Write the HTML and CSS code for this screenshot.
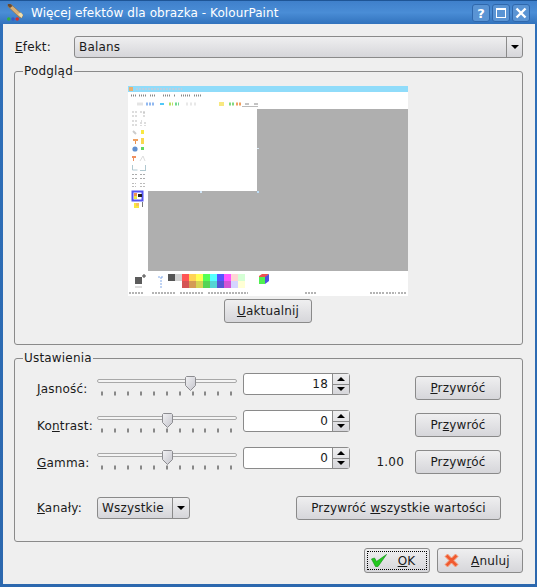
FILE: index.html
```html
<!DOCTYPE html>
<html>
<head>
  <meta charset="utf-8">
  <title>Więcej efektów dla obrazka - KolourPaint</title>
  <link rel="stylesheet" href="styles.css">
</head>
<body>
  <svg class="defs" width="0" height="0">
    <defs>
      <symbol id="slider-base" viewBox="0 0 140 24">
        <rect x="0.5" y="6.5" width="139" height="3" rx="1.5" fill="#f4f4f4" stroke="#a8a8a8"/>
        <path d="M5 18.500v4M18 18.500v4M31 18.500v4M44 18.500v4M57 18.500v4M70 18.500v4M83 18.500v4M96 18.500v4M108 18.500v4M121 18.500v4M134 18.500v4" stroke="#222"/>
      </symbol>
      <linearGradient id="handle-fill" x1="0" y1="0" x2="1" y2="1">
        <stop offset="0" stop-color="#f2f2f4"/>
        <stop offset="1" stop-color="#c4c4cc"/>
      </linearGradient>
      <symbol id="slider-handle" viewBox="0 0 11 15">
        <path d="M1.5 0.5h8l1 1v8l-5 5-5-5v-8z" fill="url(#handle-fill)" stroke="#8c8c90"/>
      </symbol>
    </defs>
  </svg>

  <div class="window">
    <div class="titlebar">
      <svg class="app-icon" width="18" height="18" viewBox="0 0 18 18">
        <path d="M1 0l2.500 0 12.500 11-1.500 3-2.500-1-11-10.500z" fill="#d8b078" stroke="#8a6a40" stroke-width="0.6"/>
        <path d="M1 0l2.500 0 2 2-2.500 2-2-2z" fill="#6a4a30"/>
        <path d="M11 10l3-1.500 2 2.500-1.500 3z" fill="#f0e0b0"/>
        <circle cx="1.800" cy="15" r="1.800" fill="#30b040"/>
        <circle cx="6" cy="15" r="1.800" fill="#3858c8"/>
        <circle cx="10.200" cy="15" r="1.800" fill="#d82c2c"/>
      </svg>
      <span class="title-text">Więcej efektów dla obrazka - KolourPaint</span>
      <div class="title-buttons">
        <div class="title-btn help">?</div>
        <div class="title-btn"><span class="max-glyph"></span></div>
        <div class="title-btn">
          <svg width="12" height="12" viewBox="0 0 12 12"><path d="M1.500 1.500l9 9M10.500 1.500l-9 9" stroke="#fff" stroke-width="2.400"/></svg>
        </div>
      </div>
    </div>

    <div class="content">
      <div class="effect-row">
        <label class="effect-label"><u>E</u>fekt:</label>
        <div class="combo combo-wide">
          <span class="combo-text">Balans</span>
          <span class="combo-arrow"><i class="arrow-down"></i></span>
        </div>
      </div>

      <fieldset class="group preview-group">
        <legend>Podgląd</legend>
        <svg class="preview" width="280" height="210" viewBox="0 0 280 210">
          <rect width="280" height="210" fill="#fff"/>
          <rect width="280" height="6" fill="#90dcfa"/>
          <rect x="1" y="1" width="4" height="4" fill="#e8b070"/>
          <path d="M8 3h46" stroke="#b8d0e0" stroke-width="2" stroke-dasharray="2 1"/>
          <!-- menu -->
          <path d="M3 9.500h5M11 9.500h7M22 9.500h5M35 9.500h8M46 9.500h1M53 9.500h9M66 9.500h8" stroke="#888" stroke-width="2" stroke-dasharray="1 1"/>
          <!-- toolbar -->
          <path d="M9 18h6" stroke="#e4e4e4" stroke-width="3"/>
          <path d="M18 18h5M24 18h3" stroke="#90b8f0" stroke-width="3" stroke-dasharray="2 1"/>
          <path d="M32 18h4" stroke="#50c8f8" stroke-width="2"/>
          <path d="M41 18h4" stroke="#b8e060" stroke-width="3" stroke-dasharray="2 1"/>
          <path d="M47 18h4" stroke="#70d890" stroke-width="3" stroke-dasharray="2 1"/>
          <path d="M58 18h10" stroke="#e8e8e8" stroke-width="3" stroke-dasharray="2 2"/>
          <path d="M91 18h5" stroke="#f8e880" stroke-width="4"/>
          <path d="M101 18h6" stroke="#80d880" stroke-width="3" stroke-dasharray="2 1"/>
          <path d="M108 18h6" stroke="#f0a060" stroke-width="3" stroke-dasharray="2 1"/>
          <path d="M114 20.500h16" stroke="#bbb"/>
          <path d="M117 18h4M126 18h4" stroke="#888" stroke-width="1"/>
          <!-- tool box -->
          <path d="M4 26h6M4 30h6M12 26h5M16 26v5" stroke="#bbb" stroke-dasharray="2 1"/>
          <path d="M4 35h5M4 39h5M13 35h1M13 36v4M17 36v4" stroke="#bbb" stroke-dasharray="2 1"/>
          <path d="M5 45l3 3" stroke="#ccc" stroke-width="2"/>
          <rect x="13" y="44" width="3" height="4" fill="#f8e840"/>
          <rect x="5" y="53" width="5" height="2" fill="#f0a060"/>
          <rect x="7" y="55" width="1" height="3" fill="#e89050"/>
          <rect x="13" y="52" width="3" height="6" fill="#f8d850"/>
          <circle cx="7" cy="63" r="2.600" fill="#6090d0"/>
          <rect x="13" y="61" width="3" height="3" fill="#60d860"/>
          <rect x="4" y="70" width="4" height="2" fill="#f09060"/>
          <rect x="5" y="72" width="1" height="3" fill="#f09060"/>
          <path d="M12 75l3-5 2 5" fill="none" stroke="#ddd"/>
          <path d="M4.500 79v5h5M12 84.500h6M17.500 79v5" fill="none" stroke="#b0c8d0"/>
          <path d="M4 88.500h5M4 92.500h5M12 88.500h5M12 92.500h5" stroke="#aaa" stroke-dasharray="2 1"/>
          <path d="M4 97.500h4M4 100.500h4M12 97.500h5M12 100.500h5" stroke="#bbb" stroke-dasharray="2 1"/>
          <rect x="4.500" y="105.500" width="10" height="9" fill="#fff" stroke="#5555f0" stroke-width="2"/>
          <rect x="6" y="107" width="3" height="3" fill="#f09050"/>
          <rect x="6" y="110" width="3" height="3" fill="#e8e840"/>
          <rect x="10" y="108" width="4" height="3" fill="#222"/>
          <rect x="6" y="117" width="5" height="5" fill="#f8e840"/>
          <rect x="8" y="117" width="3" height="3" fill="#f8c060"/>
          <rect x="14" y="116" width="1" height="5" fill="#777"/>
          <!-- canvas -->
          <rect x="20" y="23" width="260" height="162" fill="#afafaf"/>
          <rect x="20" y="23" width="109" height="82" fill="#fff"/>
          <rect x="129" y="62" width="2" height="1" fill="#dcecf8"/>
          <rect x="72" y="105" width="2" height="2" fill="#cfe4f6"/>
          <rect x="129" y="105" width="2" height="2" fill="#bcdcf4"/>
          <!-- colour box -->
          <rect x="7" y="191" width="7" height="7" fill="#5c5c5c"/>
          <path d="M14 190h4M16 188v4" stroke="#444"/>
          <path d="M7 201h7" stroke="#bbb"/>
          <path d="M30 191h6M33 191v11" stroke="#80a8e8" stroke-dasharray="2 1"/>
          <rect x="40" y="188" width="7" height="7" fill="#555"/>
          <rect x="47" y="188" width="7" height="7" fill="#d2d2d2"/>
          <g>
            <rect x="54" y="188" width="7" height="7" fill="#ff5555"/>
            <rect x="61" y="188" width="7" height="7" fill="#ffd455"/>
            <rect x="68" y="188" width="7" height="7" fill="#ffff55"/>
            <rect x="75" y="188" width="7" height="7" fill="#55ff55"/>
            <rect x="82" y="188" width="7" height="7" fill="#55ffff"/>
            <rect x="89" y="188" width="7" height="7" fill="#5555ff"/>
            <rect x="96" y="188" width="7" height="7" fill="#ff55ff"/>
            <rect x="103" y="188" width="7" height="7" fill="#ffd5d5"/>
            <rect x="110" y="188" width="7" height="7" fill="#d5ffd5"/>
            <rect x="54" y="195" width="7" height="7" fill="#d45555"/>
            <rect x="61" y="195" width="7" height="7" fill="#d49b55"/>
            <rect x="68" y="195" width="7" height="7" fill="#d4d455"/>
            <rect x="75" y="195" width="7" height="7" fill="#55d455"/>
            <rect x="82" y="195" width="7" height="7" fill="#55d4d4"/>
            <rect x="89" y="195" width="7" height="7" fill="#5555d4"/>
            <rect x="96" y="195" width="7" height="7" fill="#d455d4"/>
            <rect x="103" y="195" width="7" height="7" fill="#d5d5ff"/>
            <rect x="110" y="195" width="7" height="7" fill="#ffffd5"/>
          </g>
          <path d="M131 190l3-2 7 0-3 3h-7z" fill="#f05050"/>
          <rect x="131" y="191" width="6" height="7" fill="#50f050"/>
          <path d="M137 191l4-3v7l-4 3z" fill="#5050e0"/>
          <!-- status bar -->
          <path d="M1 207h14M24 207h24M52 207h24M80 207h26M107 207h13M177 207h12M242 207h14M258 207h10M270 207h9" stroke="#b4b4b4" stroke-width="2" stroke-dasharray="2 1"/>
        </svg>
        <button class="btn update-btn"><u>U</u>aktualnij</button>
      </fieldset>

      <fieldset class="group settings-group">
        <legend>Ustawienia</legend>
        <div class="settings-grid">
          <label class="row-label"><u>J</u>asność:</label>
          <svg class="slider" width="140" height="24">
            <use href="#slider-base" width="140" height="24"/>
            <use href="#slider-handle" x="88" y="3" width="11" height="15"/>
          </svg>
          <div class="spin">
            <span class="spin-value">18</span>
            <span class="spin-arrows"><span class="spin-up"><i class="arrow-up"></i></span><span class="spin-down"><i class="arrow-down"></i></span></span>
          </div>
          <span class="gamma-value"></span>
          <button class="btn reset-btn"><u>P</u>rzywróć</button>

          <label class="row-label">Ko<u>n</u>trast:</label>
          <svg class="slider" width="140" height="24">
            <use href="#slider-base" width="140" height="24"/>
            <use href="#slider-handle" x="65" y="3" width="11" height="15"/>
          </svg>
          <div class="spin">
            <span class="spin-value">0</span>
            <span class="spin-arrows"><span class="spin-up"><i class="arrow-up"></i></span><span class="spin-down"><i class="arrow-down"></i></span></span>
          </div>
          <span class="gamma-value"></span>
          <button class="btn reset-btn">Pr<u>z</u>ywróć</button>

          <label class="row-label"><u>G</u>amma:</label>
          <svg class="slider" width="140" height="24">
            <use href="#slider-base" width="140" height="24"/>
            <use href="#slider-handle" x="65" y="3" width="11" height="15"/>
          </svg>
          <div class="spin">
            <span class="spin-value">0</span>
            <span class="spin-arrows"><span class="spin-up"><i class="arrow-up"></i></span><span class="spin-down"><i class="arrow-down"></i></span></span>
          </div>
          <span class="gamma-value">1.00</span>
          <button class="btn reset-btn">Przyw<u>r</u>óć</button>
        </div>

        <div class="channels-row">
          <label class="channels-label"><u>K</u>anały:</label>
          <div class="combo combo-small">
            <span class="combo-text">Wszystkie</span>
            <span class="combo-arrow"><i class="arrow-down"></i></span>
          </div>
          <button class="btn reset-all-btn">Przywróć <u>w</u>szystkie wartości</button>
        </div>
      </fieldset>

      <div class="dialog-buttons">
        <button class="btn dialog-btn ok-btn">
          <span class="focus-ring">
            <svg width="16" height="13" viewBox="0 0 16 13"><path d="M0.500 5l3-1 2 3.500 10-7-8.500 12h-2.500z" fill="#22c81e" stroke="#15961a" stroke-width="0.700"/></svg>
            <span class="dialog-text"><u>O</u>K</span>
          </span>
        </button>
        <button class="btn dialog-btn cancel-btn">
          <svg width="15" height="15" viewBox="0 0 15 15"><path d="M1 3.500l2.500-2.500 4 4 4-4 2.500 2.500-4 4 4 4-2.500 2.500-4-4-4 4-2.500-2.500 4-4z" fill="#f05a30" stroke="#f4a888" stroke-width="1"/></svg>
          <span class="dialog-text"><u>A</u>nuluj</span>
        </button>
      </div>
    </div>
  </div>
</body>
</html>
```

FILE: styles.css
```css
/* KolourPaint effects dialog */
html, body {
  margin: 0;
  padding: 0;
}
body {
  font-family: "DejaVu Sans", sans-serif;
  font-size: 12px;
  letter-spacing: 0.18px;
  color: #1a1a1a;
}
.defs {
  position: absolute;
}
.window {
  width: 537px;
  height: 587px;
  box-sizing: border-box;
  display: flex;
  flex-direction: column;
  background: linear-gradient(#2f70ba, #2c68ae);
  overflow: hidden;
}

/* title bar */
.titlebar {
  height: 24px;
  flex: none;
  display: flex;
  align-items: center;
  padding: 1px 7px 0 7px;
  box-sizing: border-box;
  background: linear-gradient(#3f80cb, #4a8dd6 50%, #3273bd);
  border-top: 1px solid #1e5596;
}
.app-icon {
  flex: none;
}
.title-text {
  margin-left: 6px;
  color: #fff;
  flex: 1;
  letter-spacing: 0.08px;
}
.title-buttons {
  display: flex;
  gap: 2px;
}
.title-btn {
  width: 18px;
  height: 18px;
  box-sizing: border-box;
  border: 1px solid #2f68ad;
  border-radius: 3px;
  background: #5a94d4;
  color: #fff;
  display: flex;
  align-items: center;
  justify-content: center;
}
.help {
  font-weight: bold;
  font-size: 13px;
}
.max-glyph {
  width: 10px;
  height: 10px;
  box-sizing: border-box;
  border: 1px solid #fff;
  border-top-width: 2px;
}

/* main area */
.content {
  flex: 1;
  margin: 0 2px 3px 3px;
  padding: 12px 12px 0 11px;
  background-color: #efefef;
}
.effect-row {
  display: flex;
  align-items: center;
  height: 22px;
}
.effect-label {
  width: 59px;
  flex: none;
  padding-left: 1px;
  box-sizing: border-box;
  margin-right: 1px;
  margin-left: 0;
}
.combo {
  box-sizing: border-box;
  height: 22px;
  display: flex;
  align-items: center;
  border: 1px solid #8a8a8a;
  border-radius: 3px;
  background: linear-gradient(#efeff0, #d6d6da);
}
.combo-wide {
  flex: 1;
}
.combo-wide .combo-arrow {
  width: 15px;
}
.combo-small {
  width: 93px;
}
.combo-text {
  flex: 1;
  padding-left: 4px;
}
.combo-arrow {
  width: 16px;
  height: 100%;
  display: flex;
  align-items: center;
  justify-content: center;
  border-left: 1px solid #8a8a8a;
}
.arrow-down, .arrow-up {
  display: block;
  width: 0;
  height: 0;
  border-left: 4px solid transparent;
  border-right: 4px solid transparent;
}
.arrow-down {
  border-top: 4px solid #000;
}
.arrow-up {
  border-bottom: 4px solid #000;
}

/* groups */
.group {
  margin: 0;
  padding: 0;
  min-width: 0;
  border: 1px solid #8a8a8a;
  border-radius: 3px;
}
.group legend {
  margin-left: 8px;
  padding: 0 1px;
  line-height: 14px;
}
.preview-group {
  margin-top: 6px;
  height: 281px;
  box-sizing: border-box;
  display: flex;
  flex-direction: column;
  align-items: center;
}
.preview {
  display: block;
  margin: 8px 1px 0 0;
}
.settings-group {
  margin-top: 6px;
  height: 191px;
  box-sizing: border-box;
}

/* buttons */
.btn {
  box-sizing: border-box;
  height: 24px;
  padding: 0;
  border: 1px solid #8a8a8a;
  border-radius: 3px;
  background: linear-gradient(#efeff0, #d6d6da);
  font-family: inherit;
  font-size: 12px;
  letter-spacing: inherit;
  color: #1a1a1a;
}
.update-btn {
  width: 88px;
  margin: 3px 1px 0 0;
}

/* settings rows */
.settings-grid {
  display: grid;
  grid-template-columns: 60px 146px 107px 1fr 86px;
  grid-auto-rows: 37px;
  margin: 8px 21px 0 22px;
}
.row-label {
  margin-top: 9px;
}
.slider {
  display: block;
}
.spin {
  box-sizing: border-box;
  height: 22px;
  display: flex;
  border: 1px solid #8a8a8a;
  border-radius: 3px;
  background-color: #fff;
}
.spin-value {
  flex: 1;
  text-align: right;
  padding-right: 4px;
  line-height: 20px;
}
.spin-arrows {
  width: 16px;
  display: flex;
  flex-direction: column;
  border-left: 1px solid #8a8a8a;
  background: linear-gradient(#efeff0, #d6d6da);
}
.spin-up, .spin-down {
  flex: 1;
  display: flex;
  align-items: center;
  justify-content: center;
}
.spin-up {
  border-bottom: 1px solid #8a8a8a;
}
.gamma-value {
  text-align: right;
  padding-right: 11px;
  margin-top: 8px;
}
.reset-btn {
  margin-top: 3px;
}
.channels-row {
  display: flex;
  align-items: center;
  margin: 12px 21px 0 22px;
}
.channels-label {
  width: 60px;
  flex: none;
}
.reset-all-btn {
  width: 205px;
  margin-left: auto;
}

/* dialog buttons */
.dialog-buttons {
  display: flex;
  justify-content: flex-end;
  gap: 7px;
  margin-top: 6px;
}
.dialog-btn {
  height: 25px;
  display: flex;
  align-items: center;
}
.ok-btn {
  width: 66px;
  padding: 2px;
}
.focus-ring {
  flex: 1;
  height: 100%;
  box-sizing: border-box;
  display: flex;
  align-items: center;
  padding-left: 3px;
  border: 1px dotted #000;
}
.cancel-btn {
  width: 86px;
  padding-left: 6px;
}
.dialog-text {
  flex: 1;
  text-align: center;
}
```
